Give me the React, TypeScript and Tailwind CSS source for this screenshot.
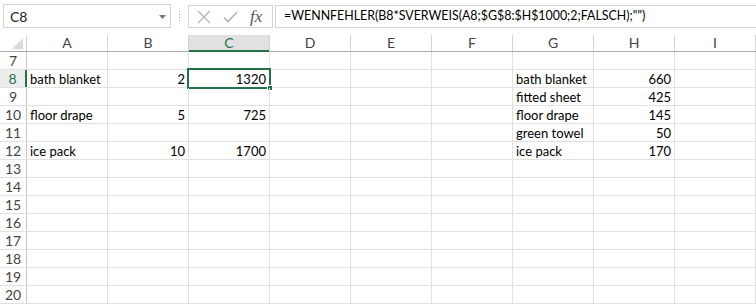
import React from "react";

const cols = ["A", "B", "C", "D", "E", "F", "G", "H", "I"];

type Cell = { t: string; r?: boolean };
const data: Record<number, Record<string, Cell>> = {
  8: { A: { t: "bath blanket" }, B: { t: "2", r: true }, C: { t: "1320", r: true }, G: { t: "bath blanket" }, H: { t: "660", r: true } },
  9: { G: { t: "fitted sheet" }, H: { t: "425", r: true } },
  10: { A: { t: "floor drape" }, B: { t: "5", r: true }, C: { t: "725", r: true }, G: { t: "floor drape" }, H: { t: "145", r: true } },
  11: { G: { t: "green towel" }, H: { t: "50", r: true } },
  12: { A: { t: "ice pack" }, B: { t: "10", r: true }, C: { t: "1700", r: true }, G: { t: "ice pack" }, H: { t: "170", r: true } },
};

const rows = Array.from({ length: 14 }, (_, i) => i + 7);

export default function App() {
  return (
    <div className="w-[756px] h-[304px] overflow-hidden bg-white text-black" style={{ fontFamily: "Lato, 'Liberation Sans', sans-serif" }}>
      {/* formula bar */}
      <div className="h-[35px] flex items-start pt-[4px] pl-[3px]">
        <div className="w-[168px] h-[24px] border border-[#d4d4d4] flex items-center justify-between pl-[6px] pr-[4px] text-[14px] text-[#222]">
          <span>C8</span>
          <svg width="7" height="4" viewBox="0 0 7 4" className="mt-[1px]"><path d="M0 0h7L3.5 4z" fill="#777" /></svg>
        </div>
        <div className="w-[17px] h-[24px] flex flex-col items-center justify-center gap-[2px]">
          <div className="w-[1px] h-[1px] bg-[#aaa]" />
          <div className="w-[1px] h-[1px] bg-[#aaa]" />
          <div className="w-[1px] h-[1px] bg-[#aaa]" />
          <div className="w-[1px] h-[1px] bg-[#aaa]" />
        </div>
        <div className="w-[85px] h-[23px] mt-[1px] border border-[#d4d4d4] flex items-center pl-[8px]">
          <svg width="14" height="14" viewBox="0 0 14 14"><path d="M1 1L13 13M13 1L1 13" stroke="#b4b4b4" strokeWidth="1.3" fill="none" /></svg>
          <svg width="15" height="12" viewBox="0 0 15 12" className="ml-[12px]"><path d="M1 6.5L5 10.5L14 1" stroke="#b4b4b4" strokeWidth="1.6" fill="none" /></svg>
          <span className="ml-[12px] text-[17px] italic text-[#555]" style={{ fontFamily: "'Liberation Serif', serif" }}>fx</span>
        </div>
        <div className="ml-[2px] flex-1 h-[23px] mt-[1px] border-y border-l border-[#d4d4d4] flex items-center pl-[8px] text-[12.4px] whitespace-nowrap">
          =WENNFEHLER(B8*SVERWEIS(A8;$G$8:$H$1000;2;FALSCH);"")
        </div>
      </div>
      {/* column headers */}
      <div className="flex h-[17px] border-b border-[#ababab] text-[14px] text-[#444]">
        <div className="w-[27px] border-r border-[#d4d4d4] flex items-end justify-end pr-[3px] pb-[2px]">
          <svg width="11" height="11" viewBox="0 0 11 11"><path d="M11 0V11H0z" fill="#dadada" /></svg>
        </div>
        {cols.map((c) => (
          <div
            key={c}
            className={
              c === "C"
                ? "w-[81px] border-r border-[#d4d4d4] bg-[#e1e1e1] text-[#217346] flex items-center justify-center leading-none relative"
                : "w-[81px] border-r border-[#d4d4d4] flex items-center justify-center leading-none"
            }
          >
            {c}
            {c === "C" && <div className="absolute left-0 right-0 bottom-[-1px] h-[2px] bg-[#217346]" />}
          </div>
        ))}
      </div>
      {/* rows */}
      {rows.map((r) => (
        <div key={r} className="flex h-[18px] border-b border-[#e1e1e1] text-[13px]">
          <div
            className={
              r === 8
                ? "w-[27px] border-r-2 border-[#217346] bg-[#ededed] flex items-end pb-[1px] justify-center text-[#217346] text-[14px] leading-none"
                : "w-[27px] border-r border-[#c6c6c6] flex items-end pb-[1px] justify-center text-[#444] text-[14px] leading-none"
            }
          >
            {r}
          </div>
          {cols.map((c) => {
            const cell = data[r]?.[c];
            return (
              <div
                key={c}
                className={
                  cell?.r
                    ? "w-[81px] border-r border-[#e1e1e1] flex items-end pb-[1px] justify-end pr-[3px] leading-none relative whitespace-nowrap"
                    : "w-[81px] border-r border-[#e1e1e1] flex items-end pb-[1px] pl-[3px] leading-none relative whitespace-nowrap"
                }
              >
                {cell?.t}
                {r === 8 && c === "C" && (
                  <div className="absolute left-[-2px] top-[-2px] right-[-2px] bottom-[-2px] border-2 border-[#217346]">
                    <div className="absolute right-[-4px] bottom-[-4px] w-[6px] h-[6px] bg-[#217346] border border-white" />
                  </div>
                )}
              </div>
            );
          })}
        </div>
      ))}
    </div>
  );
}
